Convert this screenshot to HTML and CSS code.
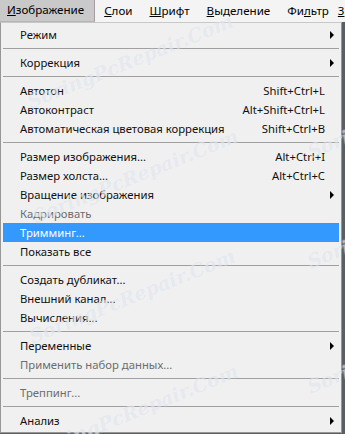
FILE: index.html
```html
<!DOCTYPE html>
<html lang="ru">
<head>
  <meta charset="UTF-8" />
  <title>Изображение</title>
  <link rel="stylesheet" href="styles.css">
</head>
<body>
  <div class="screen">
    <div class="menubar">
      <span class="top-item active"><u>И</u>зображение</span>
      <span class="top-item"><u>С</u>лои</span>
      <span class="top-item"><u>Ш</u>рифт</span>
      <span class="top-item"><u>В</u>ыделение</span>
      <span class="top-item">Фи<u>л</u>ьтр</span>
      <span class="top-item last"><u>3</u>D</span>
    </div>

    <div class="menu">
      <div class="item"><span class="label">Режим</span><span class="arrow"></span></div>
      <div class="sep"></div>
      <div class="item"><span class="label">Коррекция</span><span class="arrow"></span></div>
      <div class="sep"></div>
      <div class="item"><span class="label">Автотон</span><span class="key">Shift+Ctrl+L</span></div>
      <div class="item"><span class="label">Автоконтраст</span><span class="key">Alt+Shift+Ctrl+L</span></div>
      <div class="item"><span class="label">Автоматическая цветовая коррекция</span><span class="key">Shift+Ctrl+B</span></div>
      <div class="sep"></div>
      <div class="item"><span class="label">Размер изображения...</span><span class="key">Alt+Ctrl+I</span></div>
      <div class="item"><span class="label">Размер холста...</span><span class="key">Alt+Ctrl+C</span></div>
      <div class="item"><span class="label">Вращение изображения</span><span class="arrow"></span></div>
      <div class="item disabled"><span class="label">Кадрировать</span></div>
      <div class="item selected"><span class="label">Тримминг...</span></div>
      <div class="item"><span class="label">Показать все</span></div>
      <div class="sep"></div>
      <div class="item"><span class="label">Создать дубликат...</span></div>
      <div class="item"><span class="label">Внешний канал...</span></div>
      <div class="item"><span class="label">Вычисления...</span></div>
      <div class="sep"></div>
      <div class="item"><span class="label">Переменные</span><span class="arrow"></span></div>
      <div class="item disabled"><span class="label">Применить набор данных...</span></div>
      <div class="sep"></div>
      <div class="item disabled"><span class="label">Треппинг...</span></div>
      <div class="sep"></div>
      <div class="item"><span class="label">Анализ</span><span class="arrow"></span></div>
    </div>

    <!-- watermark of the source site -->
    <span class="wm wm1">SoringPcRepair.Com</span>
    <span class="wm wm2">SoringPcRepair.Com</span>
    <span class="wm wm3">SoringPcRepair.Com</span>
    <span class="wm wm4">SoringPcRepair.Com</span>
    <span class="wm wm5">SoringPcRepair.Com</span>
    <span class="wm wm6">SoringPcRepair.Com</span>
    <span class="wm wm7">SoringPcRepair.Com</span>
  </div>
</body>
</html>
```

FILE: styles.css
```css
body {
  margin: 0;
  font-family: 'Noto Sans', 'Open Sans', sans-serif;
  font-size: 11.3px;
  color: #000;
  background: #5a5f66;
}
.screen {
  position: relative;
  width: 345px;
  height: 434px;
  overflow: hidden;
}
.menubar {
  display: flex;
  height: 22px;
  background: #f4f4f4;
  font-size: 11.6px;
  white-space: nowrap;
}
.top-item {
  padding: 0 8px 0 9px;
  line-height: 21px;
}
.top-item.active {
  padding-left: 7px;
  padding-right: 10px;
  background: #c9c9c9;
  border-right: 1px solid #a89aa3;
  border-bottom: 1px solid #b5b5b5;
  line-height: 20px;
}
.top-item.last {
  padding-left: 1px;
}
.menu {
  width: 336px;
  padding: 2px;
  border: 1px solid #979797;
  border-top-color: #c8c8c8;
  background: #f0f0f0;
}
.item {
  display: flex;
  align-items: center;
  height: 19px;
  padding-left: 17px;
  white-space: nowrap;
  color: #111;
}
.item .label {
  flex: 1;
}
.item .key {
  padding-right: 14px;
}
.item.disabled {
  color: #6d6d6d;
}
.item.selected {
  background: #3399ff;
  color: #fff;
}
.arrow {
  width: 0;
  height: 0;
  margin-right: 5px;
  border-top: 4px solid transparent;
  border-bottom: 4px solid transparent;
  border-left: 4px solid #000;
}
.sep {
  height: 9px;
  display: flex;
  align-items: center;
}
.sep::before {
  content: "";
  flex: 1;
  border-top: 1px solid #a0a0a0;
}
.wm {
  position: absolute;
  font-family: 'DejaVu Serif', serif;
  font-style: italic;
  font-weight: bold;
  font-size: 19px;
  color: rgba(150, 170, 200, 0.2);
  text-shadow: 0 0 1px rgba(255, 255, 255, 0.6);
  transform: rotate(-22deg);
  transform-origin: center;
  white-space: nowrap;
  pointer-events: none;
}
.wm1 { left: 20px; top: 50px; }
.wm2 { left: 25px; top: 165px; }
.wm3 { left: 22px; top: 285px; }
.wm4 { left: 25px; top: 400px; }
.wm5 { left: 300px; top: 100px; }
.wm6 { left: 300px; top: 210px; }
.wm7 { left: 300px; top: 335px; }
```
